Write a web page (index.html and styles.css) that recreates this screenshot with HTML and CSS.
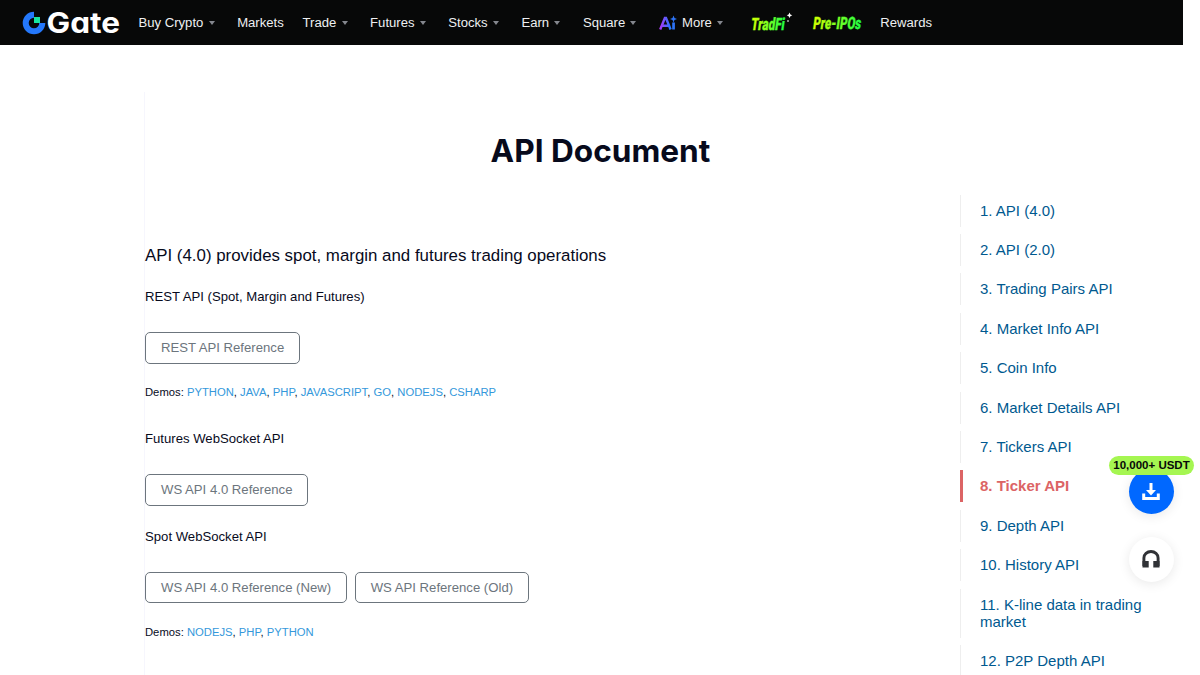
FILE: index.html
```html
<!DOCTYPE html>
<html lang="en">
<head>
    <meta charset="UTF-8">
    <meta name="viewport" content="width=device-width, initial-scale=1.0">
    <title>API Document</title>
    <link rel="stylesheet" href="styles.css">
</head>
<body>
    <header class="header">
        <svg class="logo" width="100" height="36" viewBox="0 -3 100 36">
            <path d="M12 6.700A8.300 8.300 0 1 0 20.300 15" fill="none" stroke="#2478fb" stroke-width="6"/>
            <rect x="12" y="9" width="6" height="6" fill="#17e6a1"/>
            <text class="logo-text" x="24.500" y="24.500" textLength="73.500" lengthAdjust="spacingAndGlyphs">Gate</text>
        </svg>
        <nav class="nav">
            <a class="drop">Buy Crypto</a>
            <a>Markets</a>
            <a class="drop">Trade</a>
            <a class="drop">Futures</a>
            <a class="drop">Stocks</a>
            <a class="drop">Earn</a>
            <a class="drop">Square</a>
            <a class="drop more">
                <svg width="18" height="16" viewBox="0 0 18 16">
                    <defs>
                        <linearGradient id="ai" x1="0" x2="1"><stop offset="0" stop-color="#a936f5"/><stop offset="1" stop-color="#2479ff"/></linearGradient>
                    </defs>
                    <path d="M1.200 14.500L5.900 3H7l4.600 11.500M3.300 10.700h6.400" fill="none" stroke="url(#ai)" stroke-width="2.400"/>
                    <path d="M13.200 7.500h2.700v7h-2.700zM14.500 .500l1 2.500 2.500 1-2.500 1-1 2.500-1-2.500-2.500-1 2.500-1z" fill="#2d73f5"/>
                </svg>More</a>
            <a class="promo">
                <svg width="44" height="28" viewBox="0 0 44 28">
                    <defs>
                        <linearGradient id="lime" x1="0" x2="1"><stop offset="0" stop-color="#d5ff00"/><stop offset="1" stop-color="#1eff45"/></linearGradient>
                    </defs>
                    <text class="promo-text" transform="translate(0.500 20.700) skewX(-8)" textLength="33.500" lengthAdjust="spacingAndGlyphs">TradFi</text>
                    <path d="M39.500 3.500l.9 1.900 1.900.9-1.900.9-.9 1.900-.9-1.900-1.900-.9 1.900-.9zM38 11l1 1-1 1-1-1z" fill="#fff"/>
                </svg>
            </a>
            <a class="promo">
                <svg width="49" height="28" viewBox="0 0 49 28">
                    <text class="promo-text" transform="translate(0.500 19.700) skewX(-8)" textLength="48" lengthAdjust="spacingAndGlyphs">Pre-IPOs</text>
                </svg>
            </a>
            <a>Rewards</a>
        </nav>
    </header>
    <main class="page">
        <h1>API Document</h1>
        <div class="columns">
            <section class="content">
                <h2>API (4.0) provides spot, margin and futures trading operations</h2>
                <h3>REST API (Spot, Margin and Futures)</h3>
                <div class="buttons"><a class="btn">REST API Reference</a></div>
                <p class="demos">Demos: <a>PYTHON</a>, <a>JAVA</a>, <a>PHP</a>, <a>JAVASCRIPT</a>, <a>GO</a>, <a>NODEJS</a>, <a>CSHARP</a></p>
                <h3>Futures WebSocket API</h3>
                <div class="buttons"><a class="btn">WS API 4.0 Reference</a></div>
                <h3 class="spot">Spot WebSocket API</h3>
                <div class="buttons"><a class="btn">WS API 4.0 Reference (New)</a><a class="btn">WS API Reference (Old)</a></div>
                <p class="demos">Demos: <a>NODEJS</a>, <a>PHP</a>, <a>PYTHON</a></p>
            </section>
            <aside class="toc">
                <a>1. API (4.0)</a>
                <a>2. API (2.0)</a>
                <a>3. Trading Pairs API</a>
                <a>4. Market Info API</a>
                <a>5. Coin Info</a>
                <a>6. Market Details API</a>
                <a>7. Tickers API</a>
                <a class="active">8. Ticker API</a>
                <a>9. Depth API</a>
                <a>10. History API</a>
                <a>11. K-line data in trading market</a>
                <a>12. P2P Depth API</a>
            </aside>
        </div>
    </main>
    <div class="float">
        <span class="badge">10,000+ USDT</span>
        <a class="round download">
            <svg width="18" height="18" viewBox="0 0 18 18">
                <path d="M9 0v8M1.700 10.500v5h14.600v-5" fill="none" stroke="#fff" stroke-width="3"/>
                <path d="M4 7h10l-5 5.500z" fill="#fff"/>
            </svg>
        </a>
        <a class="round support">
            <svg width="18" height="18" viewBox="0 0 18 18">
                <path d="M1.900 16V8a7.100 6.500 0 0 1 14.200 0V16" fill="none" stroke="#303236" stroke-width="2.900"/>
                <path d="M.5 11h6.200v6.500H.5zM11.300 11h6.200v6.500h-6.200z" fill="#303236"/>
            </svg>
        </a>
    </div>
</body>
</html>
```
FILE: styles.css
```css
*{box-sizing: border-box;}
body{
    margin: 0;
    height: 675px;
    overflow: hidden;
    background: #fff;
    color: #070a1c;
    font-family: "Liberation Sans", Arial, sans-serif;
    font-size: 13.125px;
}
.header{
    display: flex;
    align-items: center;
    width: 1183px;
    height: 45px;
    padding-left: 22px;
    background: #070808;
}
.logo{flex: none;margin-right: 16.5px;overflow: visible;}
.logo-text{font-family: Inter, sans-serif;font-size: 28px;font-weight: 700;font-feature-settings: "cv11";fill: #fff;}
.nav{display: flex;align-items: center;height: 45px;color: #eef0f2;}
.nav a{display: flex;align-items: center;margin-right: 18.8px;white-space: nowrap;}
.nav svg{overflow: visible;}
.drop::after{
    content: "";
    margin: 1px 3.8px 0 5.2px;
    border: 3.7px solid transparent;
    border-top: 4.8px solid #84878e;
    border-bottom: 0;
}
.more svg{margin-right: 5px;}
.nav .promo:nth-child(9){margin-left: 4px;}
.promo-text{
    font-family: Roboto, sans-serif;
    font-size: 17px;
    font-weight: 900;
    fill: url(#lime);
    stroke: url(#lime);
    stroke-width: .3px;
}

.page{padding: 47px 0 0 144px;}
h1{
    width: 912px;
    height: 102px;
    margin: 0;
    padding-top: 38px;
    border-left: 1px solid #f6f6fd;
    font: 700 31.6px/41px Inter, sans-serif;
    text-align: center;
}
.columns{display: flex;}
.content{
    width: 816px;
    height: 490px;
    padding-top: 51px;
    border-left: 1px solid #f6f6fd;
}
h2{margin: 0;font-size: 16.875px;font-weight: 400;line-height: 22px;}
h3{margin: 20px 0 25px;font-size: 13.15px;font-weight: 400;line-height: 20px;}
.spot{margin-top: 21px;}
.buttons{display: flex;gap: 7.5px;}
.btn{
    height: 31.5px;
    padding: 0 15px;
    border: 1px solid #6c757d;
    border-radius: 5px;
    color: #6c757d;
    font-size: 13.15px;
    line-height: 30px;
}
.demos{margin: 18.5px 0 27px;font-size: 11.25px;line-height: 20px;}
.demos a{color: #3498db;}

.toc{display: flex;flex-direction: column;gap: 7.4px;width: 190px;padding-top: .6px;}
.toc a{
    padding: 7px 0 8px 19px;
    border-left: 1px solid #eee;
    color: #00598f;
    font-size: 15px;
    line-height: 17px;
}
.toc .active{padding-left: 17px;border-left: 3px solid #dc6465;color: #dc6465;font-weight: 700;}

/* floating buttons */
.float{
    position: absolute;
    top: 456px;
    left: 1109px;
    display: flex;
    flex-direction: column;
    align-items: center;
    width: 85px;
}
.badge{
    z-index: 1;
    width: 85px;
    height: 19px;
    border-radius: 10px;
    background: #a5f651;
    color: #070808;
    font-size: 11.5px;
    font-weight: 700;
    line-height: 19px;
    text-align: center;
}
.round{
    display: flex;
    align-items: center;
    justify-content: center;
    width: 45px;
    height: 45px;
    border-radius: 50%;
    box-shadow: 0 2px 12px rgba(0, 0, 0, .09);
}
.round svg{margin: 0 1px 0 0;}
.download{margin-top: -6px;background: #0068ff;}
.support{margin-top: 22.5px;background: #fff;}
```
